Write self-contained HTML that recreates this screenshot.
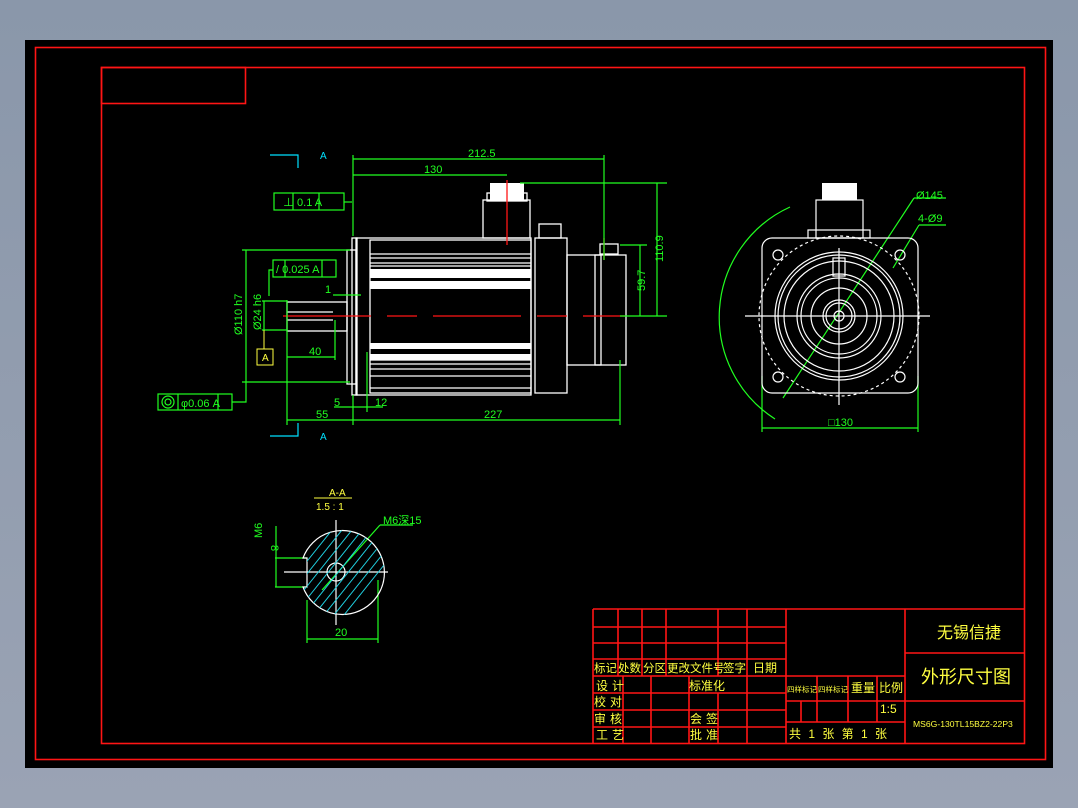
<!DOCTYPE html>
<html><head><meta charset="utf-8"><style>
html,body{margin:0;padding:0;}
body{width:1078px;height:808px;background:linear-gradient(#8a97aa,#9aa3b4);overflow:hidden;}
svg{position:absolute;left:0;top:0;}
text{font-family:"Liberation Sans","Noto Sans CJK SC",sans-serif;}
</style></head><body>
<svg width="1078" height="808" viewBox="0 0 1078 808">
<rect x="25" y="40" width="1028" height="728" fill="#000"/>
<g fill="none" stroke="#ff1515" stroke-width="1.6">
<rect x="35.5" y="47.5" width="1010" height="712"/>
<rect x="101.5" y="67.5" width="923" height="676"/>
<rect x="101.5" y="67.5" width="144" height="36"/>
<line x1="593" y1="609" x2="1024" y2="609"/>
<line x1="593" y1="609" x2="593" y2="743"/>
<line x1="786" y1="609" x2="786" y2="743"/>
<line x1="905" y1="609" x2="905" y2="743"/>
<g>
<line x1="593" y1="627" x2="786" y2="627"/><line x1="593" y1="643" x2="786" y2="643"/>
<line x1="593" y1="659" x2="786" y2="659"/><line x1="593" y1="676" x2="905" y2="676"/>
<line x1="593" y1="693" x2="786" y2="693"/><line x1="593" y1="710" x2="786" y2="710"/>
<line x1="593" y1="727" x2="786" y2="727"/>
<line x1="618" y1="609" x2="618" y2="676"/><line x1="642" y1="609" x2="642" y2="676"/>
<line x1="666" y1="609" x2="666" y2="676"/><line x1="718" y1="609" x2="718" y2="676"/>
<line x1="747" y1="609" x2="747" y2="743"/>
<line x1="623" y1="676" x2="623" y2="743"/><line x1="651" y1="676" x2="651" y2="743"/>
<line x1="689" y1="676" x2="689" y2="743"/><line x1="718" y1="693" x2="718" y2="743"/>
<line x1="786" y1="701" x2="905" y2="701"/><line x1="786" y1="722" x2="905" y2="722"/>
<line x1="817" y1="676" x2="817" y2="722"/><line x1="848" y1="676" x2="848" y2="722"/>
<line x1="877" y1="676" x2="877" y2="722"/><line x1="801" y1="701" x2="801" y2="722"/>
<line x1="905" y1="653" x2="1024" y2="653"/><line x1="905" y1="701" x2="1024" y2="701"/>
</g>
</g>
<g fill="#ffff40" font-size="12">
<text x="594" y="672" font-size="11.5">标记</text><text x="618" y="672" font-size="11.5">处数</text><text x="643" y="672" font-size="11.5">分区</text>
<text x="667" y="672" font-size="11.5">更改文件号</text><text x="723" y="672" font-size="11.5">签字</text><text x="753" y="672">日期</text>
<text x="596" y="690" letter-spacing="4">设计</text><text x="594" y="706" letter-spacing="4">校对</text>
<text x="594" y="723" letter-spacing="4">审核</text><text x="596" y="739" letter-spacing="4">工艺</text>
<text x="689" y="690">标准化</text><text x="690" y="723" letter-spacing="4">会签</text><text x="690" y="739" letter-spacing="4">批准</text>
<text x="787" y="692" font-size="7.5">四样标记</text><text x="818" y="692" font-size="7.5">四样标记</text>
<text x="851" y="692">重量</text><text x="879" y="692">比例</text>
<text x="880" y="713">1:5</text>
<text x="789" y="738" letter-spacing="2">共 1 张 第 1 张</text>
<text x="937" y="638" font-size="16">无锡信捷</text>
<text x="921" y="683" font-size="18">外形尺寸图</text>
<text x="913" y="727" font-size="8.6">MS6G-130TL15BZ2-22P3</text>
</g>
<g fill="none" stroke="#fff" stroke-width="1.3">
<rect x="287" y="302" width="60" height="29"/>
<line x1="287" y1="312" x2="333" y2="312"/><line x1="287" y1="320" x2="333" y2="320"/>
<rect x="347" y="250" width="9" height="134"/>
<rect x="352" y="238" width="5" height="157"/>
<rect x="356" y="238" width="175" height="157"/>
<rect x="370" y="240" width="161" height="153"/>
<line x1="370" y1="254" x2="531" y2="254"/><line x1="370" y1="258" x2="531" y2="258"/>
<line x1="370" y1="263" x2="531" y2="263"/><line x1="370" y1="266" x2="531" y2="266"/>
<line x1="370" y1="360" x2="531" y2="360"/><line x1="370" y1="364" x2="531" y2="364"/>
<line x1="370" y1="369" x2="531" y2="369"/><line x1="370" y1="376" x2="531" y2="376"/>
<line x1="370" y1="388" x2="531" y2="388"/>
<rect x="535" y="238" width="32" height="155"/>
<rect x="567" y="255" width="34" height="110"/>
<rect x="595" y="255" width="31" height="110"/>
<rect x="600" y="244" width="18" height="10"/>
<rect x="483" y="200" width="47" height="38"/>
<rect x="487" y="193" width="40" height="8"/>
<rect x="539" y="224" width="22" height="14"/>
</g>
<g fill="#fff">
<rect x="370" y="269" width="161" height="9"/><rect x="370" y="281" width="161" height="8"/>
<rect x="370" y="343" width="161" height="6"/><rect x="370" y="354" width="161" height="6"/>
<rect x="490" y="183" width="34" height="17"/>
<rect x="822" y="183" width="35" height="17"/>
</g>
<g stroke="#ff1515" stroke-width="1.3" stroke-dasharray="88,16,30,16">
<line x1="283" y1="316" x2="625" y2="316"/>
</g>
<line x1="507" y1="180" x2="507" y2="245" stroke="#ff1515" stroke-width="1.3"/>
<line x1="604" y1="238" x2="604" y2="260" stroke="#ff1515" stroke-width="1.3"/>
<g stroke="#20ff20" stroke-width="1.2" fill="none">
<line x1="353" y1="159" x2="604" y2="159"/><line x1="353" y1="175" x2="507" y2="175"/>
<line x1="353" y1="155" x2="353" y2="236"/><line x1="604" y1="155" x2="604" y2="260"/>
<line x1="520" y1="183" x2="667" y2="183"/><line x1="657" y1="183" x2="657" y2="316"/>
<line x1="620" y1="245" x2="647" y2="245"/><line x1="640" y1="245" x2="640" y2="316"/>
<line x1="620" y1="316" x2="667" y2="316"/>
<line x1="287" y1="420" x2="620" y2="420"/><line x1="287" y1="300" x2="287" y2="425"/>
<line x1="620" y1="360" x2="620" y2="425"/><line x1="353" y1="395" x2="353" y2="425"/>
<line x1="246" y1="250" x2="246" y2="383"/><line x1="242" y1="250" x2="350" y2="250"/>
<line x1="242" y1="382" x2="350" y2="382"/>
<line x1="264" y1="301" x2="264" y2="330"/><line x1="262" y1="301" x2="287" y2="301"/><line x1="262" y1="330" x2="287" y2="330"/>
<line x1="287" y1="357" x2="335" y2="357"/><line x1="335" y1="320" x2="335" y2="360"/>
<line x1="333" y1="295" x2="361" y2="295"/>
<line x1="334" y1="407" x2="383" y2="407"/><line x1="367" y1="352" x2="367" y2="412"/>
<rect x="274" y="193" width="70" height="17"/><line x1="293" y1="193" x2="293" y2="210"/><line x1="319" y1="193" x2="319" y2="210"/>
<line x1="344" y1="202" x2="352" y2="202"/>
<rect x="273" y="260" width="63" height="17"/><line x1="285" y1="260" x2="285" y2="277"/><line x1="322" y1="260" x2="322" y2="277"/>
<polyline points="273,270 269,270 269,296"/>
<rect x="158" y="394" width="74" height="16"/><line x1="178" y1="394" x2="178" y2="410"/><line x1="218" y1="394" x2="218" y2="410"/>
<polyline points="232,402 246,402 246,383"/>
<circle cx="168" cy="402" r="6"/><circle cx="168" cy="402" r="3"/>
<path d="M790 207 A121 121 0 0 0 775 419"/>
<line x1="783" y1="398" x2="914" y2="198"/><line x1="914" y1="198" x2="946" y2="198"/>
<line x1="893" y1="268" x2="919" y2="225"/><line x1="919" y1="225" x2="946" y2="225"/>
<line x1="762" y1="428" x2="918" y2="428"/>
<line x1="762" y1="376" x2="762" y2="432"/><line x1="918" y1="376" x2="918" y2="432"/>
<line x1="307" y1="639" x2="378" y2="639"/><line x1="307" y1="600" x2="307" y2="643"/><line x1="378" y1="580" x2="378" y2="643"/>
<line x1="275" y1="558" x2="307" y2="558"/><line x1="275" y1="587" x2="307" y2="587"/>
<line x1="276" y1="526" x2="276" y2="587"/>
<line x1="322" y1="590" x2="380" y2="525"/><line x1="380" y1="525" x2="413" y2="525"/>
</g>
<g fill="#20ff20" font-size="11">
<text x="468" y="157">212.5</text><text x="424" y="173">130</text>
<text x="484" y="418">227</text><text x="316" y="418">55</text><text x="334" y="406">5</text><text x="375" y="406">12</text>
<text x="309" y="355">40</text><text x="325" y="293">1</text>
<text x="283" y="206">⊥  0.1  A</text><text x="276" y="273">/ 0.025 A</text><text x="181" y="407">φ0.06  A</text>
<text transform="translate(663,262) rotate(-90)">110.9</text>
<text transform="translate(645,291) rotate(-90)">59.7</text>
<text transform="translate(242,335) rotate(-90)">Ø110 h7</text>
<text transform="translate(261,330) rotate(-90)">Ø24 h6</text>
<text x="916" y="199">Ø145</text><text x="918" y="222">4-Ø9</text><text x="828" y="426">□130</text>
<text x="335" y="636">20</text><text x="383" y="524">M6深15</text>
<text transform="translate(262,538) rotate(-90)">M6</text><text transform="translate(271,545) rotate(90)">8</text>
</g>
<g fill="#ffff40" font-size="10"><text x="329" y="496">A-A</text><text x="316" y="510">1.5 : 1</text></g>
<line x1="314" y1="498" x2="352" y2="498" stroke="#ffff40"/>
<rect x="257" y="349" width="16" height="16" fill="none" stroke="#ffff40"/>
<text x="262" y="361" fill="#ffff40" font-size="10">A</text>
<line x1="264" y1="330" x2="264" y2="349" stroke="#ffff40"/>
<g stroke="#00e0ff" stroke-width="1.2" fill="none">
<polyline points="270,155 298,155 298,168"/><polyline points="270,436 298,436 298,423"/>
</g>
<g fill="#00e0ff" font-size="10"><text x="320" y="159">A</text><text x="320" y="440">A</text></g>
<g fill="none" stroke="#fff" stroke-width="1.2">
<rect x="762" y="238" width="156" height="155" rx="10"/>
<circle cx="839" cy="316" r="80" stroke-dasharray="3,3"/>
<circle cx="839" cy="316" r="64"/><circle cx="839" cy="316" r="61"/><circle cx="839" cy="316" r="55"/>
<circle cx="839" cy="316" r="42"/><circle cx="839" cy="316" r="38"/>
<circle cx="839" cy="316" r="28"/><circle cx="839" cy="316" r="16"/><circle cx="839" cy="316" r="13"/>
<circle cx="839" cy="316" r="5"/>
<circle cx="778" cy="255" r="5"/><circle cx="900" cy="255" r="5"/><circle cx="778" cy="377" r="5"/><circle cx="900" cy="377" r="5"/>
<rect x="833" y="258" width="12" height="18"/>
<line x1="745" y1="316" x2="930" y2="316"/><line x1="839" y1="248" x2="839" y2="405"/>
<rect x="816" y="200" width="47" height="38"/><rect x="808" y="230" width="62" height="8"/>
<path d="M307 558 L307 587 L303 587 A42 42 0 1 0 303 558 Z"/>
<circle cx="336" cy="572" r="9"/>
<line x1="284" y1="572" x2="388" y2="572"/><line x1="336" y1="520" x2="336" y2="625"/>
</g>
<clipPath id="c"><path d="M307 558 L307 587 L303 587 A42 42 0 1 0 303 558 Z"/></clipPath>
<g clip-path="url(#c)" stroke="#20d0e0" stroke-width="1">
<line x1="290" y1="620" x2="370" y2="520"/><line x1="300" y1="620" x2="380" y2="520"/><line x1="310" y1="620" x2="390" y2="520"/>
<line x1="320" y1="620" x2="400" y2="520"/><line x1="330" y1="620" x2="410" y2="520"/><line x1="340" y1="620" x2="420" y2="520"/>
<line x1="280" y1="620" x2="360" y2="520"/><line x1="270" y1="620" x2="350" y2="520"/><line x1="260" y1="620" x2="340" y2="520"/>
<line x1="250" y1="620" x2="330" y2="520"/>
</g>
</svg>
</body></html>
